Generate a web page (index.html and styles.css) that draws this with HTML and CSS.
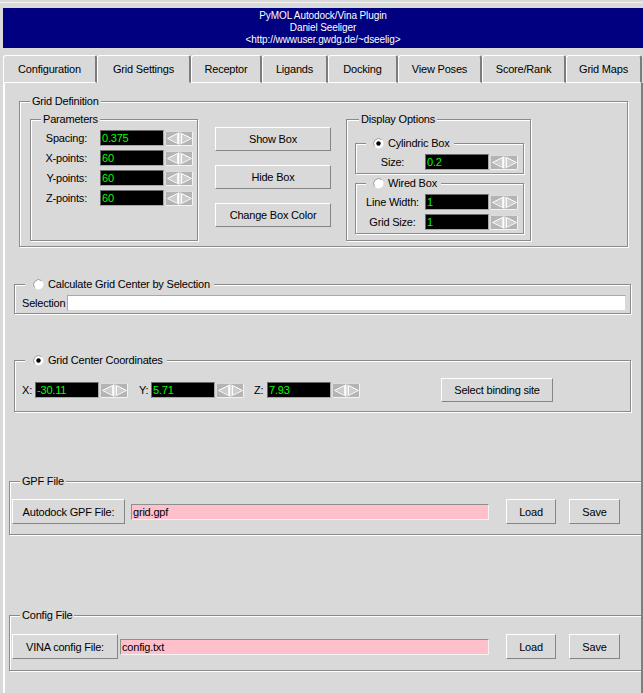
FILE: index.html
```html
<!DOCTYPE html>
<html>
<head>
<meta charset="utf-8">
<link rel="stylesheet" href="styles.css">
</head>
<body>
<svg class="defs" width="0" height="0">
  <symbol id="spin" viewBox="0 0 28 15">
    <rect width="28" height="15" fill="#b4b4b4"/>
    <path d="M0.5 14.5V0.5H27.5" stroke="#dcdcdc" fill="none"/>
    <path d="M27.5 0.5V14.5H0.5" stroke="#f2f2f2" fill="none"/>
    <polygon points="2.5,7.5 12.5,2.5 12.5,12.5" fill="#cdcdcd"/>
    <path d="M2.5 7.5L12.5 2.5" stroke="#fff" fill="none"/>
    <path d="M12.5 2.5V12.5L2.5 7.5" stroke="#f4f4f4" fill="none"/>
    <path d="M13.5 1.5V13.5" stroke="#fff"/>
    <path d="M15 1.5V13.5" stroke="#fff"/>
    <polygon points="16.5,2.5 26.5,7.5 16.5,12.5" fill="#cdcdcd"/>
    <path d="M16.5 12.5V2.5L26.5 7.5" stroke="#fff" fill="none"/>
    <path d="M26.5 7.5L16.5 12.5" stroke="#f4f4f4" fill="none"/>
  </symbol>
  <symbol id="radio-off" viewBox="0 0 11 11">
    <circle cx="5.5" cy="5.5" r="5" fill="#fff"/>
    <path d="M1.6 8.6A5 5 0 0 1 8.6 1.6" stroke="#9a9a9a" fill="none"/>
  </symbol>
  <symbol id="radio-on" viewBox="0 0 11 11">
    <circle cx="5.5" cy="5.5" r="5" fill="#fff"/>
    <path d="M1.6 8.6A5 5 0 0 1 8.6 1.6" stroke="#9a9a9a" fill="none"/>
    <circle cx="5.5" cy="5.5" r="2.2" fill="#000"/>
  </symbol>
</svg>
<div class="window">
  <div class="title">
    <div>PyMOL Autodock/Vina Plugin</div>
    <div>Daniel Seeliger</div>
    <div>&lt;http://wwwuser.gwdg.de/~dseelig&gt;</div>
  </div>
  <div class="tabs">
    <div class="tab w94">Configuration</div>
    <div class="tab w94 selected">Grid Settings</div>
    <div class="tab w71">Receptor</div>
    <div class="tab w66">Ligands</div>
    <div class="tab w70">Docking</div>
    <div class="tab w84">View Poses</div>
    <div class="tab w84">Score/Rank</div>
    <div class="tab w76">Grid Maps</div>
  </div>
  <div class="page">
    <div class="group griddef">
      <div class="legend lg-gd">Grid Definition</div>
      <div class="gd-row">
        <div class="group params">
          <div class="legend lg-params">Parameters</div>
          <div class="prow first"><span class="plabel">Spacing:</span><span class="entry dark pentry">0.375</span><svg class="spin"><use href="#spin"/></svg></div>
          <div class="prow"><span class="plabel">X-points:</span><span class="entry dark pentry">60</span><svg class="spin"><use href="#spin"/></svg></div>
          <div class="prow"><span class="plabel">Y-points:</span><span class="entry dark pentry">60</span><svg class="spin"><use href="#spin"/></svg></div>
          <div class="prow"><span class="plabel">Z-points:</span><span class="entry dark pentry">60</span><svg class="spin"><use href="#spin"/></svg></div>
        </div>
        <div class="btncol">
          <div class="button boxbtn">Show Box</div>
          <div class="button boxbtn">Hide Box</div>
          <div class="button boxbtn">Change Box Color</div>
        </div>
        <div class="group display">
          <div class="legend lg-display">Display Options</div>
          <div class="group sub cyl">
            <div class="legend lg-sub"><svg class="radio"><use href="#radio-on"/></svg>Cylindric Box</div>
            <div class="drow first"><span class="dlabel">Size:</span><span class="entry dark">0.2</span><svg class="spin"><use href="#spin"/></svg></div>
          </div>
          <div class="group sub wired">
            <div class="legend lg-sub"><svg class="radio"><use href="#radio-off"/></svg>Wired Box</div>
            <div class="drow first"><span class="dlabel">Line Width:</span><span class="entry dark">1</span><svg class="spin"><use href="#spin"/></svg></div>
            <div class="drow"><span class="dlabel">Grid Size:</span><span class="entry dark">1</span><svg class="spin"><use href="#spin"/></svg></div>
          </div>
        </div>
      </div>
    </div>

    <div class="group calc">
      <div class="legend lg-radio"><svg class="radio"><use href="#radio-off"/></svg>Calculate Grid Center by Selection</div>
      <div class="selrow"><span class="sellabel">Selection</span><span class="entry white selentry"></span></div>
    </div>

    <div class="group center">
      <div class="legend lg-radio"><svg class="radio"><use href="#radio-on"/></svg>Grid Center Coordinates</div>
      <div class="crow">
        <span class="clabel cx">X:</span><span class="entry dark">-30.11</span><svg class="spin"><use href="#spin"/></svg>
        <span class="clabel cy">Y:</span><span class="entry dark">5.71</span><svg class="spin"><use href="#spin"/></svg>
        <span class="clabel cz">Z:</span><span class="entry dark">7.93</span><svg class="spin"><use href="#spin"/></svg>
        <div class="button sitebtn">Select binding site</div>
      </div>
    </div>

    <div class="group file gpf">
      <div class="legend lg-file">GPF File</div>
      <div class="frow">
        <div class="button fbtn-gpf">Autodock GPF File:</div>
        <span class="entry pink pe-gpf">grid.gpf</span>
        <div class="button loadbtn">Load</div>
        <div class="button savebtn">Save</div>
      </div>
    </div>

    <div class="group file cfg">
      <div class="legend lg-file">Config File</div>
      <div class="frow">
        <div class="button fbtn-cfg">VINA config File:</div>
        <span class="entry pink pe-cfg">config.txt</span>
        <div class="button loadbtn">Load</div>
        <div class="button savebtn">Save</div>
      </div>
    </div>
  </div>
</div>
</body>
</html>
```
FILE: styles.css
```css
html, body {
  margin: 0;
  padding: 0;
}
body {
  width: 643px;
  height: 693px;
  overflow: hidden;
  background: #d9d9d9;
  font-family: "Liberation Sans", Arial, sans-serif;
  font-size: 11px;
  letter-spacing: -0.2px;
  color: #000;
}
.defs {
  display: block;
  width: 0;
  height: 0;
  overflow: hidden;
}
.window {
  margin-top: 2px;
  border-top: 1px solid #f2f2f2;
}
.title {
  margin: 5px 0 0 3px;
  height: 40px;
  box-sizing: border-box;
  padding-top: 2px;
  background: #000080;
  color: #fff;
  text-align: center;
  font-size: 10px;
  line-height: 12px;
  letter-spacing: -0.1px;
}
.tabs {
  display: flex;
  margin: 7px 0 0 3px;
  height: 28px;
}
.tab {
  box-sizing: border-box;
  height: 28px;
  border-top: 1px solid #fff;
  border-left: 1px solid #fff;
  border-right: 2px solid #7c7c7c;
  border-bottom: 1px solid #fff;
  border-radius: 3px 3px 0 0;
  display: flex;
  align-items: center;
  justify-content: center;
  white-space: nowrap;
}
.tab.selected {
  border-bottom-color: #d9d9d9;
}
.w94 { width: 94px; }
.w71 { width: 71px; }
.w66 { width: 66px; }
.w70 { width: 70px; }
.w84 { width: 84px; }
.w76 { width: 76px; }

.page {
  margin-left: 3px;
  width: 640px;
  height: 610px;
  box-sizing: border-box;
  border-left: 2px solid #fff;
  border-right: 2px solid #7f7f7f;
  display: flex;
  flex-direction: column;
  align-items: flex-start;
  overflow: hidden;
}

.group {
  box-sizing: border-box;
  border: 1px solid #8b8b8b;
  box-shadow: inset 1px 1px #fff, 1px 1px #fff;
  display: flex;
  flex-direction: column;
  align-items: flex-start;
  flex-shrink: 0;
}
.legend {
  margin-top: -8px;
  height: 14px;
  line-height: 14px;
  padding: 0 2px;
  background: #d9d9d9;
  display: flex;
  align-items: center;
  white-space: nowrap;
}
.radio {
  width: 11px;
  height: 11px;
  margin-right: 4px;
  flex-shrink: 0;
}
.spin {
  width: 28px;
  height: 15px;
  margin-left: 1px;
  flex-shrink: 0;
}
.entry {
  box-sizing: border-box;
  height: 16px;
  line-height: 14px;
  padding-left: 1px;
  border: 1px solid;
  white-space: nowrap;
  overflow: hidden;
  flex-shrink: 0;
}
.entry.dark {
  width: 64px;
  background: #000;
  color: #00ff00;
  border-color: #6a6a6a #a9a9a9 #a9a9a9 #6a6a6a;
}
.entry.white {
  background: #fff;
  border-color: #a8a8a8 #d6d6d6 #d6d6d6 #a8a8a8;
}
.entry.pink {
  background: #ffc0cb;
  border-color: #8f8f8f #f4f4f4 #f4f4f4 #8f8f8f;
}
.button {
  box-sizing: border-box;
  border: 1px solid;
  border-color: #fff #858585 #858585 #fff;
  display: flex;
  align-items: center;
  justify-content: center;
  white-space: nowrap;
  flex-shrink: 0;
}

/* Grid definition */
.griddef {
  margin: 18px 0 0 14px;
  width: 609px;
  height: 146px;
}
.lg-gd { margin-left: 10px; }
.gd-row {
  display: flex;
  align-items: flex-start;
  margin: 11px 0 0 10px;
}
.params {
  width: 168px;
  height: 122px;
}
.lg-params { margin-left: 10px; }
.prow {
  display: flex;
  align-items: center;
  height: 20px;
}
.prow.first { margin-top: 2px; }
.plabel {
  width: 56px;
  margin-right: 13px;
  text-align: right;
}
.btncol {
  display: flex;
  flex-direction: column;
  gap: 14px;
  margin: 8px 0 0 17px;
}
.boxbtn {
  width: 116px;
  height: 24px;
}
.display {
  margin-left: 15px;
  width: 185px;
  height: 122px;
}
.lg-display { margin-left: 12px; }
.sub {
  margin: 17px 0 0 8px;
  width: 169px;
}
.sub.cyl { height: 31px; }
.sub.wired {
  margin-top: 9px;
  height: 51px;
}
.lg-sub {
  margin-left: 10px;
  padding: 0 4px 0 7px;
}
.drow {
  display: flex;
  align-items: center;
  height: 20px;
  padding-left: 4px;
}
.drow.first { margin-top: 2px; }
.dlabel {
  width: 65px;
  text-align: center;
}

/* Grid center by selection */
.calc {
  margin: 37px 0 0 9px;
  width: 617px;
  height: 30px;
}
.lg-radio {
  margin-left: 10px;
  padding: 0 4px 0 8px;
}
.selrow {
  display: flex;
  align-items: center;
  align-self: stretch;
  height: 20px;
  margin-top: 2px;
  padding: 0 4px 0 7px;
}
.sellabel { width: 45px; }
.selentry {
  flex: 1;
  flex-shrink: 1;
}

/* Grid center coordinates */
.center {
  margin: 46px 0 0 9px;
  width: 617px;
  height: 52px;
}
.crow {
  display: flex;
  align-items: center;
  height: 28px;
  margin-top: 9px;
  padding-left: 7px;
}
.clabel { flex-shrink: 0; }
.cx { width: 13px; }
.cy { width: 12px; margin-left: 11px; }
.cz { width: 13px; margin-left: 10px; }
.sitebtn {
  margin-left: 81px;
  width: 112px;
  height: 24px;
}

/* File groups */
.file {
  margin-left: 4px;
  width: 650px;
}
.gpf {
  margin-top: 69px;
  height: 54px;
}
.cfg {
  margin-top: 80px;
  height: 56px;
}
.lg-file { margin-left: 10px; }
.frow {
  display: flex;
  align-items: center;
  height: 25px;
  padding-left: 2px;
}
.gpf .frow { margin-top: 11px; }
.cfg .frow { margin-top: 12px; }
.frow .button { height: 25px; }
.fbtn-gpf { width: 113px; }
.fbtn-cfg { width: 106px; }
.pe-gpf {
  margin-left: 6px;
  width: 358px;
}
.pe-cfg {
  margin-left: 2px;
  width: 369px;
}
.loadbtn {
  margin-left: 17px;
  width: 50px;
}
.savebtn {
  margin-left: 13px;
  width: 51px;
}
```
